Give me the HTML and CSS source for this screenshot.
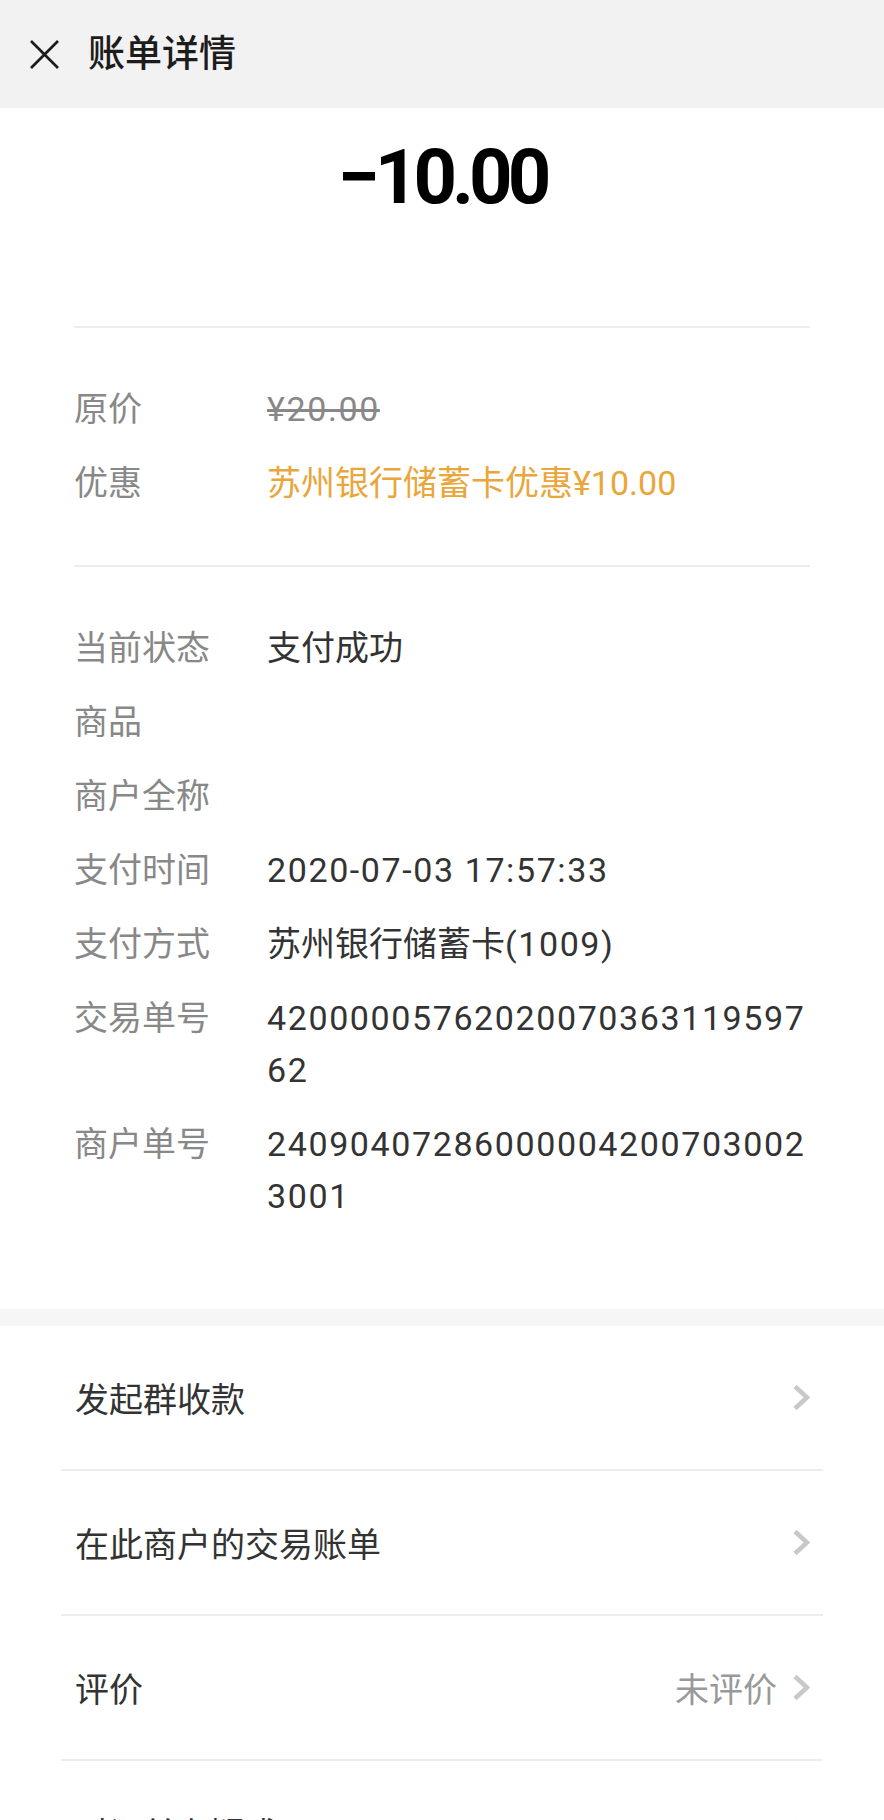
FILE: index.html
```html
<!DOCTYPE html>
<html lang="zh-CN">
<head>
    <meta charset="UTF-8">
    <meta name="viewport" content="width=device-width, initial-scale=1.0">
    <title>账单详情</title>
    <link rel="stylesheet" href="styles.css">
</head>
<body>
    <header class="topbar">
        <svg class="close-icon" width="31" height="31" viewBox="0 0 31 31">
            <line x1="2" y1="2" x2="29" y2="29" />
            <line x1="29" y1="2" x2="2" y2="29" />
        </svg>
        <h1>账单详情</h1>
    </header>

    <div class="bill">
        <div class="amount">−10.00</div>

        <dl class="details">
            <dt>原价</dt>
            <dd class="num strike">¥20.00</dd>
            <dt>优惠</dt>
            <dd class="discount">苏州银行储蓄卡优惠¥10.00</dd>
        </dl>

        <dl class="details last">
            <dt>当前状态</dt>
            <dd>支付成功</dd>
            <dt>商品</dt>
            <dd></dd>
            <dt>商户全称</dt>
            <dd></dd>
            <dt>支付时间</dt>
            <dd class="num">2020-07-03 17:57:33</dd>
            <dt>支付方式</dt>
            <dd>苏州银行储蓄卡<span class="num">(1009)</span></dd>
            <dt>交易单号</dt>
            <dd class="num">4200000576202007036311959762</dd>
            <dt>商户单号</dt>
            <dd class="num">240904072860000042007030023001</dd>
        </dl>
    </div>

    <div class="gap"></div>

    <ul class="menu">
        <li>
            <span>发起群收款</span>
            <svg class="chevron" width="18" height="27" viewBox="0 0 18 27"><polyline points="3,2.5 15,13.5 3,24.5" /></svg>
        </li>
        <li>
            <span>在此商户的交易账单</span>
            <svg class="chevron" width="18" height="27" viewBox="0 0 18 27"><polyline points="3,2.5 15,13.5 3,24.5" /></svg>
        </li>
        <li>
            <span>评价</span>
            <span class="side">未评价</span>
            <svg class="chevron" width="18" height="27" viewBox="0 0 18 27"><polyline points="3,2.5 15,13.5 3,24.5" /></svg>
        </li>
        <li>
            <span>对订单有疑惑</span>
            <svg class="chevron" width="18" height="27" viewBox="0 0 18 27"><polyline points="3,2.5 15,13.5 3,24.5" /></svg>
        </li>
    </ul>
</body>
</html>
```

FILE: styles.css
```css
body {
    margin: 0;
    font-family: Roboto, "Noto Sans CJK SC", sans-serif;
    background-color: #ffffff;
    color: #333333;
}

.topbar {
    display: flex;
    align-items: center;
    height: 108px;
    padding-left: 29px;
    background-color: #f2f2f2;
    box-sizing: border-box;
}

.close-icon {
    flex-shrink: 0;
    stroke: #1c1c1c;
    stroke-width: 2.6;
}

.topbar h1 {
    margin: 0 0 0 28px;
    font-size: 37px;
    font-weight: 500;
    color: #1c1c1c;
    line-height: 1;
}

.bill {
    padding: 0 74px 87px;
}

.amount {
    padding: 31px 0 111px;
    font-size: 76px;
    font-weight: 700;
    line-height: 76px;
    letter-spacing: -5px;
    text-align: center;
    color: #000000;
    border-bottom: 2px solid #ededed;
}

.details {
    display: grid;
    grid-template-columns: 193px 1fr;
    row-gap: 22px;
    margin: 0;
    padding: 55px 0 56px;
    font-size: 34px;
    line-height: 52px;
    border-bottom: 2px solid #ededed;
}

.details.last {
    padding-bottom: 0;
    border-bottom: none;
}

.details dt {
    color: #888888;
}

.details dd {
    margin: 0;
    color: #333333;
    word-break: break-all;
}

.num {
    letter-spacing: 1.6px;
}

.details .strike {
    color: #888888;
    text-decoration: line-through;
}

.details .discount {
    color: #e9a63a;
}

.gap {
    height: 17px;
    background-color: #f6f6f6;
}

.menu {
    list-style: none;
    margin: 0;
    padding: 0 61px;
}

.menu li {
    display: flex;
    align-items: center;
    height: 143px;
    padding: 0 13px 0 14px;
    font-size: 34px;
    color: #333333;
    border-bottom: 2px solid #ededed;
}

.menu li span:first-child {
    flex: 1;
}

.menu .side {
    margin-right: 15px;
    color: #999999;
}

.chevron {
    fill: none;
    stroke: #c8c8c8;
    stroke-width: 4.5;
}
```
